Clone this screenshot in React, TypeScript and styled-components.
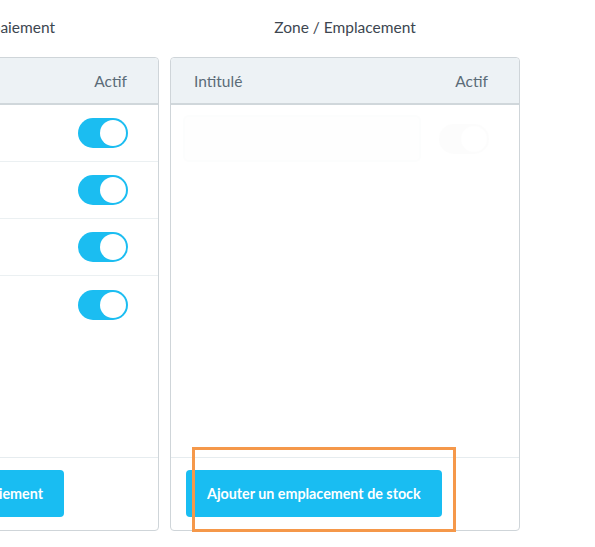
import React from "react";
import styled, { createGlobalStyle } from "styled-components";

const Global = createGlobalStyle`
  html, body { margin: 0; padding: 0; background: #fff; overflow: hidden; }
  body { font-family: "Lato", "Open Sans", sans-serif; color: #363a41; }
  * { box-sizing: border-box; }
`;

const Page = styled.div`
  width: 595px;
  height: 547px;
  overflow: hidden;
  position: relative;
`;

const Columns = styled.div`
  display: flex;
  gap: 11px;
  margin-left: -191px;
  padding-top: 17px;
`;

const Column = styled.section`
  width: 350px;
  display: flex;
  flex-direction: column;
`;

const Title = styled.h3`
  margin: 0 0 22px;
  height: 18px;
  line-height: 20px;
  text-align: center;
  font-size: 15.5px;
  font-weight: 400;
  color: #3d4650;
`;

const Card = styled.div`
  position: relative;
  height: 474px;
  border: 1px solid #cfd5d9;
  border-radius: 4px;
  display: flex;
  flex-direction: column;
  background: #fff;
`;

const Head = styled.div`
  height: 47px;
  display: flex;
  align-items: center;
  justify-content: space-between;
  padding: 0 31px 0 23px;
  background: #edf2f5;
  border-bottom: 2px solid #d0d7db;
  border-radius: 4px 4px 0 0;
  font-size: 15.5px;
  color: #5b6c78;
`;

const Body = styled.div`
  flex: 1;
  display: flex;
  flex-direction: column;
`;

const Row = styled.div`
  height: 57px;
  display: flex;
  align-items: center;
  justify-content: flex-end;
  padding-right: 30px;
  border-bottom: 1px solid #ebf0f2;
  &:last-child { border-bottom: none; }
`;

const GhostRow = styled.div`
  display: flex;
  align-items: center;
  gap: 18px;
  padding: 10px 0 0 12px;
  opacity: 0.035;
`;

const GhostInput = styled.div`
  width: 238px;
  height: 47px;
  border: 2px solid #bbcdd2;
  border-radius: 6px;
  background: #fafafa;
`;

const Toggle = styled.span<{ $on?: boolean }>`
  position: relative;
  display: inline-block;
  width: 50px;
  height: 30px;
  border-radius: 15px;
  background: ${(p) => (p.$on ? "#1bbdf1" : "#c4c4c4")};
  &::after {
    content: "";
    position: absolute;
    top: 2px;
    right: 2px;
    width: 26px;
    height: 26px;
    border-radius: 50%;
    background: #fff;
  }
`;

const Foot = styled.div`
  border-top: 1px solid #e6ecef;
  padding: 12px 15px 13px;
  display: flex;
`;

const Button = styled.button<{ $width?: number }>`
  height: 47px;
  padding: 0 21px;
  border: none;
  border-radius: 4px;
  background: #19bdf2;
  color: #fff;
  font-family: "Lato", "Open Sans", sans-serif;
  font-weight: 700;
  font-size: 14.3px;
  white-space: nowrap;
  cursor: pointer;
  ${(p) => (p.$width ? `width: ${p.$width}px; text-align: right;` : "")}
`;

const Highlight = styled.div`
  position: absolute;
  left: 21px;
  top: 389px;
  width: 264px;
  height: 85px;
  border: 3px solid #f5984a;
  pointer-events: none;
`;

export default function App() {
  return (
    <Page>
      <Global />
      <Columns>
        <Column>
          <Title>Moyens de paiement</Title>
          <Card>
            <Head>
              <span>Intitulé</span>
              <span>Actif</span>
            </Head>
            <Body>
              {[0, 1, 2, 3].map((i) => (
                <Row key={i}>
                  <Toggle $on />
                </Row>
              ))}
            </Body>
            <Foot>
              <Button $width={239}>Ajouter un moyen de paiement</Button>
            </Foot>
          </Card>
        </Column>
        <Column>
          <Title>Zone / Emplacement</Title>
          <Card>
            <Head>
              <span>Intitulé</span>
              <span>Actif</span>
            </Head>
            <Body>
              <GhostRow>
                <GhostInput />
                <Toggle />
              </GhostRow>
            </Body>
            <Foot>
              <Button>Ajouter un emplacement de stock</Button>
            </Foot>
            <Highlight />
          </Card>
        </Column>
      </Columns>
    </Page>
  );
}
